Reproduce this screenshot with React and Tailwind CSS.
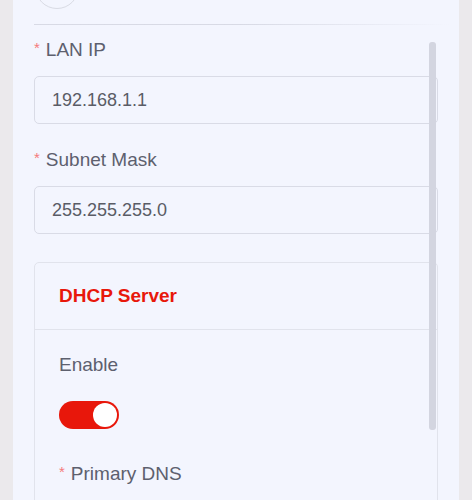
import React from "react";

function Field({ label, value }) {
  return (
    <div className="flex flex-col">
      <label className="flex h-[26px] items-center text-[19px] leading-[26px] text-[#5d606e]">
        <span className="mr-[6px] mt-[-4px] text-[15px] text-[#f57a7a]">*</span>
        {label}
      </label>
      <div className="mt-[13px] flex h-[48px] items-center rounded-[5px] border border-[#d9dbe6] bg-[#f3f5fe] pl-[17px] text-[18px] text-[#5a5c66]">
        {value}
      </div>
    </div>
  );
}

function Toggle() {
  return (
    <div className="flex h-[28px] w-[60px] items-center justify-end rounded-full bg-[#e8170b] pr-[2px]">
      <div className="h-[24px] w-[24px] rounded-full bg-white" />
    </div>
  );
}

export default function App() {
  return (
    <div
      className="h-[500px] overflow-hidden bg-[#ebe9ec] px-[13px]"
      style={{ fontFamily: '"Liberation Sans", Arial, sans-serif' }}
    >
      <div className="relative flex h-full flex-col bg-[#f3f5fe] px-[21px]">
        {/* avatar circle, mostly scrolled out of view */}
        <div className="ml-[1px] mt-[-35px] h-[44px] w-[44px] shrink-0 rounded-full border border-[#d9dbe4] bg-[#f3f5fe]" />
        <div className="mr-[-12px] mt-[15px] h-px shrink-0 bg-gradient-to-r from-[#d8dae5] via-[#d8dae5] to-transparent" />

        <div className="mt-[12px]">
          <Field label="LAN IP" value="192.168.1.1" />
        </div>
        <div className="mt-[23px]">
          <Field label="Subnet Mask" value="255.255.255.0" />
        </div>

        <div className="mt-[28px] shrink-0 rounded-[5px] border border-[#e1e3ec] bg-[#f3f5fe]">
          <div className="flex h-[67px] items-center border-b border-[#e1e3ec] pl-[24px] text-[19px] font-bold text-[#e8170b]">
            DHCP Server
          </div>
          <div className="flex flex-col items-start px-[24px] pb-[20px] pt-[22px]">
            <span className="h-[26px] text-[19px] leading-[26px] text-[#5d606e]">Enable</span>
            <div className="mt-[23px]">
              <Toggle />
            </div>
            <label className="mt-[32px] flex h-[26px] items-center text-[19px] leading-[26px] text-[#5d606e]">
              <span className="mr-[6px] mt-[-4px] text-[15px] text-[#f57a7a]">*</span>
              Primary DNS
            </label>
          </div>
        </div>

        {/* overlay scrollbar */}
        <div className="absolute left-[416px] top-[42px] h-[388px] w-[7px] rounded-[3px] bg-[#d3d5e0]" />
      </div>
    </div>
  );
}
